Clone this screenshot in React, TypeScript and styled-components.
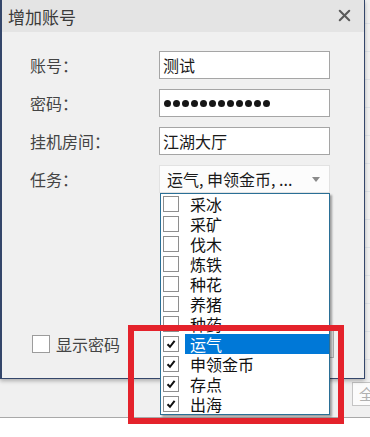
import React from 'react';
import styled, { createGlobalStyle } from 'styled-components';
import { X } from 'lucide-react';

const GlobalStyle = createGlobalStyle`
  html, body {
    margin: 0;
    padding: 0;
  }

  body {
    width: 370px;
    height: 437px;
    overflow: hidden;
    background: #fff;
    font-family: 'Liberation Sans', 'Noto Sans CJK SC', sans-serif;
  }
`;

const tasks = [
  { name: '采冰', checked: false },
  { name: '采矿', checked: false },
  { name: '伐木', checked: false },
  { name: '炼铁', checked: false },
  { name: '种花', checked: false },
  { name: '养猪', checked: false },
  { name: '种药', checked: false },
  { name: '运气', checked: true, active: true },
  { name: '申领金币', checked: true },
  { name: '存点', checked: true },
  { name: '出海', checked: true }
];

const Page = styled.div`
  position: relative;
  width: 370px;
  height: 437px;
  overflow: hidden;
  display: flex;
  flex-direction: column;
  background: #fff;
`;

const Workspace = styled.div`
  height: 418px;
  box-sizing: border-box;
  display: flex;
  flex-direction: column;
  background: #f0f0f0;
  border-bottom: 1px solid #a9a9a9;
`;

const TableArea = styled.div`
  height: 379px;
  background: repeating-linear-gradient(
    to bottom,
    transparent 0 27px,
    #dfe3e8 27px 28px
  );
  background-position: 0 -4px;
`;

const ToolRow = styled.div`
  flex: 1;
  display: flex;
  align-items: flex-start;
  padding: 3px 0 0 352px;
`;

const GhostButton = styled.div`
  flex-shrink: 0;
  width: 70px;
  height: 24px;
  box-sizing: border-box;
  padding-left: 6px;
  border: 1px solid #c4c4c4;
  background: #fbfbfb;
  color: #b0b0b0;
  font-family: 'Noto Sans CJK SC', sans-serif;
  font-size: 15px;
  line-height: 22px;
`;

const Dialog = styled.div`
  position: absolute;
  left: 0;
  top: 0;
  width: 365px;
  height: 379px;
  box-sizing: border-box;
  display: flex;
  flex-direction: column;
  background: #f0f0f0;
  border-left: 2px solid #34466a;
  border-right: 1px solid #34466a;
  border-bottom: 1px solid #34466a;
  box-shadow: 0 2px 4px rgba(0, 0, 0, 0.28);
`;

const TitleBar = styled.div`
  height: 32px;
  flex-shrink: 0;
  display: flex;
  align-items: center;
  justify-content: space-between;
  padding: 0 10px 0 6px;
  background: #e4e4e4;
`;

const Title = styled.span`
  font-family: 'Noto Sans CJK SC', sans-serif;
  font-size: 17px;
  color: #3a3a3a;
  line-height: 1;
`;

const CloseIcon = styled(X)`
  color: #5a5a5a;
  margin-top: -2px;
`;

const Body = styled.div`
  flex: 1;
  display: flex;
  flex-direction: column;
  padding: 19px 30px 20px 28px;
`;

const Form = styled.div`
  display: grid;
  grid-template-columns: 129px 171px;
  grid-auto-rows: 28px;
  row-gap: 10px;
  align-items: center;
`;

const Label = styled.span`
  font-family: 'Noto Sans CJK SC', sans-serif;
  font-size: 16px;
  line-height: 20px;
  color: #444;
`;

const Field = styled.div<{ soft?: boolean }>`
  height: 28px;
  box-sizing: border-box;
  display: flex;
  align-items: center;
  padding: ${({ soft }) => (soft ? '0 9px 0 7px' : '0 3px')};
  background: ${({ soft }) => (soft ? '#fcfcfc' : '#fff')};
  border: 1px solid ${({ soft }) => (soft ? '#e2e2e2' : '#a5a5a5')};
  font-size: 16px;
  color: #1a1a1a;
`;

const FieldText = styled.span`
  flex: 1;
  font-family: 'Noto Sans CJK SC', sans-serif;
  line-height: 20px;
  white-space: nowrap;
`;

const Dots = styled.div`
  display: flex;
  gap: 2px;
  padding-left: 1px;
`;

const Dot = styled.span`
  width: 7px;
  height: 7px;
  border-radius: 50%;
  background: #161616;
`;

const Caret = styled.span`
  width: 0;
  height: 0;
  border-left: 4px solid transparent;
  border-right: 4px solid transparent;
  border-top: 5px solid #8a8a8a;
`;

const Footer = styled.div`
  margin-top: auto;
  display: flex;
  align-items: center;
  justify-content: space-between;
  padding-left: 2px;
`;

const ShowPassword = styled.label`
  display: flex;
  align-items: center;
  gap: 6px;
  font-family: 'Noto Sans CJK SC', sans-serif;
  font-size: 16px;
  line-height: 20px;
  color: #444;
`;

const Box = styled.span<{ size: number }>`
  width: ${({ size }) => size}px;
  height: ${({ size }) => size}px;
  flex-shrink: 0;
  box-sizing: border-box;
  display: flex;
  align-items: center;
  justify-content: center;
  background: #fff;
  border: 1px solid ${({ size }) => (size > 16 ? '#9c9c9c' : '#8e8e8e')};
`;

const OkButton = styled.div`
  width: 120px;
  height: 29px;
  box-sizing: border-box;
  border: 1px solid #adadad;
  background: #e1e1e1;
`;

const Popup = styled.div`
  position: absolute;
  left: 160px;
  top: 193px;
  width: 170px;
  box-sizing: border-box;
  background: #fff;
  border: 1px solid #2a6f96;
  box-shadow: 2px 2px 2px rgba(0, 0, 0, 0.35);
`;

const Item = styled.div`
  height: 20px;
  display: flex;
  align-items: center;
  padding-left: 2px;
`;

const ItemText = styled.span<{ active?: boolean }>`
  flex: 1;
  height: 20px;
  margin-left: 6px;
  padding-left: 5px;
  font-family: 'Noto Sans CJK SC', sans-serif;
  font-size: 16px;
  line-height: 20px;
  color: ${({ active }) => (active ? '#fff' : '#111')};
  background: ${({ active }) => (active ? '#0078d7' : 'transparent')};
`;

const Highlight = styled.div`
  position: absolute;
  left: 128px;
  top: 325px;
  width: 216px;
  height: 99px;
  box-sizing: border-box;
  border: 6px solid #e4222b;
  pointer-events: none;
`;

const Tick = () => (
  <svg width="10" height="10" viewBox="0 0 10 10">
    <path d="M1.5 5.2 L4 7.8 L8.6 1.8" fill="none" stroke="#111" strokeWidth="2" />
  </svg>
);

export default function App() {
  return (
    <>
      <GlobalStyle />
      <Page>
        <Workspace>
          <TableArea />
          <ToolRow>
            <GhostButton>全</GhostButton>
          </ToolRow>
        </Workspace>

        <Dialog>
          <TitleBar>
            <Title>增加账号</Title>
            <CloseIcon size={19} strokeWidth={2.6} />
          </TitleBar>
          <Body>
            <Form>
              <Label>账号：</Label>
              <Field>
                <FieldText>测试</FieldText>
              </Field>

              <Label>密码：</Label>
              <Field>
                <Dots>
                  {Array.from({ length: 12 }).map((_, i) => (
                    <Dot key={i} />
                  ))}
                </Dots>
              </Field>

              <Label>挂机房间：</Label>
              <Field>
                <FieldText>江湖大厅</FieldText>
              </Field>

              <Label>任务：</Label>
              <Field soft>
                <FieldText>运气, 申领金币, ...</FieldText>
                <Caret />
              </Field>
            </Form>

            <Footer>
              <ShowPassword>
                <Box size={18} />
                显示密码
              </ShowPassword>
              <OkButton />
            </Footer>
          </Body>
        </Dialog>

        <Popup>
          {tasks.map((task) => (
            <Item key={task.name}>
              <Box size={16}>{task.checked && <Tick />}</Box>
              <ItemText active={task.active}>{task.name}</ItemText>
            </Item>
          ))}
        </Popup>

        <Highlight />
      </Page>
    </>
  );
}
